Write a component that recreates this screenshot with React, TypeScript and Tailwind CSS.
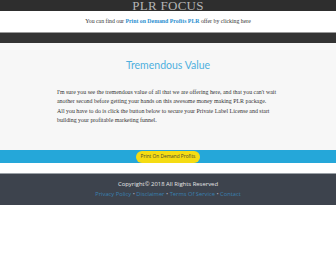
export default function App() {
  return (
    <div className="w-[336px] h-[280px] bg-white overflow-hidden">
      {/* top brand bar */}
      <div className="h-[11px] bg-[#2e2e2e] flex items-end justify-center overflow-hidden">
        <span className="font-['Liberation_Serif',serif] text-[13px] leading-[13px] text-[#b5b5b5] tracking-[0.3px] translate-y-[1px]">
          PLR FOCUS
        </span>
      </div>

      {/* notice strip */}
      <div className="h-[21px] bg-white flex items-center justify-center font-['Liberation_Serif',serif] text-[5.8px] text-[#333]">
        <span>
          You can find our{' '}
          <span className="text-[#2a8fd0] font-bold">Print on Demand Profits PLR</span>{' '}
          offer by clicking here
        </span>
      </div>

      {/* dark nav bar */}
      <div className="h-[11px] bg-[#333] border-t border-[#9a9a9a]" />

      {/* main content */}
      <div className="h-[107px] bg-[#f7f7f7] flex flex-col items-center pt-[16px]">
        <h1 className="font-['Lato',sans-serif] text-[10.5px] leading-[12px] text-[#4fb0de]">
          Tremendous Value
        </h1>
        <div className="w-[222px] mt-[17px] font-['Liberation_Serif',serif] text-[5.9px] leading-[9.4px] text-[#333] whitespace-nowrap">
          I'm sure you see the tremendous value of all that we are offering here, and that you can't wait
          <br />
          another second before getting your hands on this awesome money making PLR package.
          <br />
          All you have to do is click the button below to secure your Private Label License and start
          <br />
          building your profitable marketing funnel.
        </div>
      </div>

      {/* call to action band */}
      <div className="h-[13px] bg-[#25a7d9] flex items-end justify-center">
        <button className="h-[12px] w-[64px] rounded-full bg-[#f5dc13] font-['Open_Sans',sans-serif] text-[4.8px] text-[#4a4a30] flex items-center justify-center">
          Print On Demand Profits
        </button>
      </div>

      <div className="h-[10px] bg-white" />

      {/* footer */}
      <div className="h-[32px] bg-[#3d434d] border-t border-[#9aa0a6] flex flex-col items-center justify-center font-['Open_Sans',sans-serif]">
        <p className="text-[5.9px] leading-[9.5px] text-[#e6e6e6]">Copyright© 2018 All Rights Reserved</p>
        <p className="text-[5.75px] leading-[9px] text-[#3a80b0]">
          Privacy Policy <span className="text-[#aab]">•</span> Disclaimer{' '}
          <span className="text-[#aab]">•</span> Terms Of Service{' '}
          <span className="text-[#aab]">•</span> Contact
        </p>
      </div>

      <div className="h-[75px] bg-white" />
    </div>
  );
}
